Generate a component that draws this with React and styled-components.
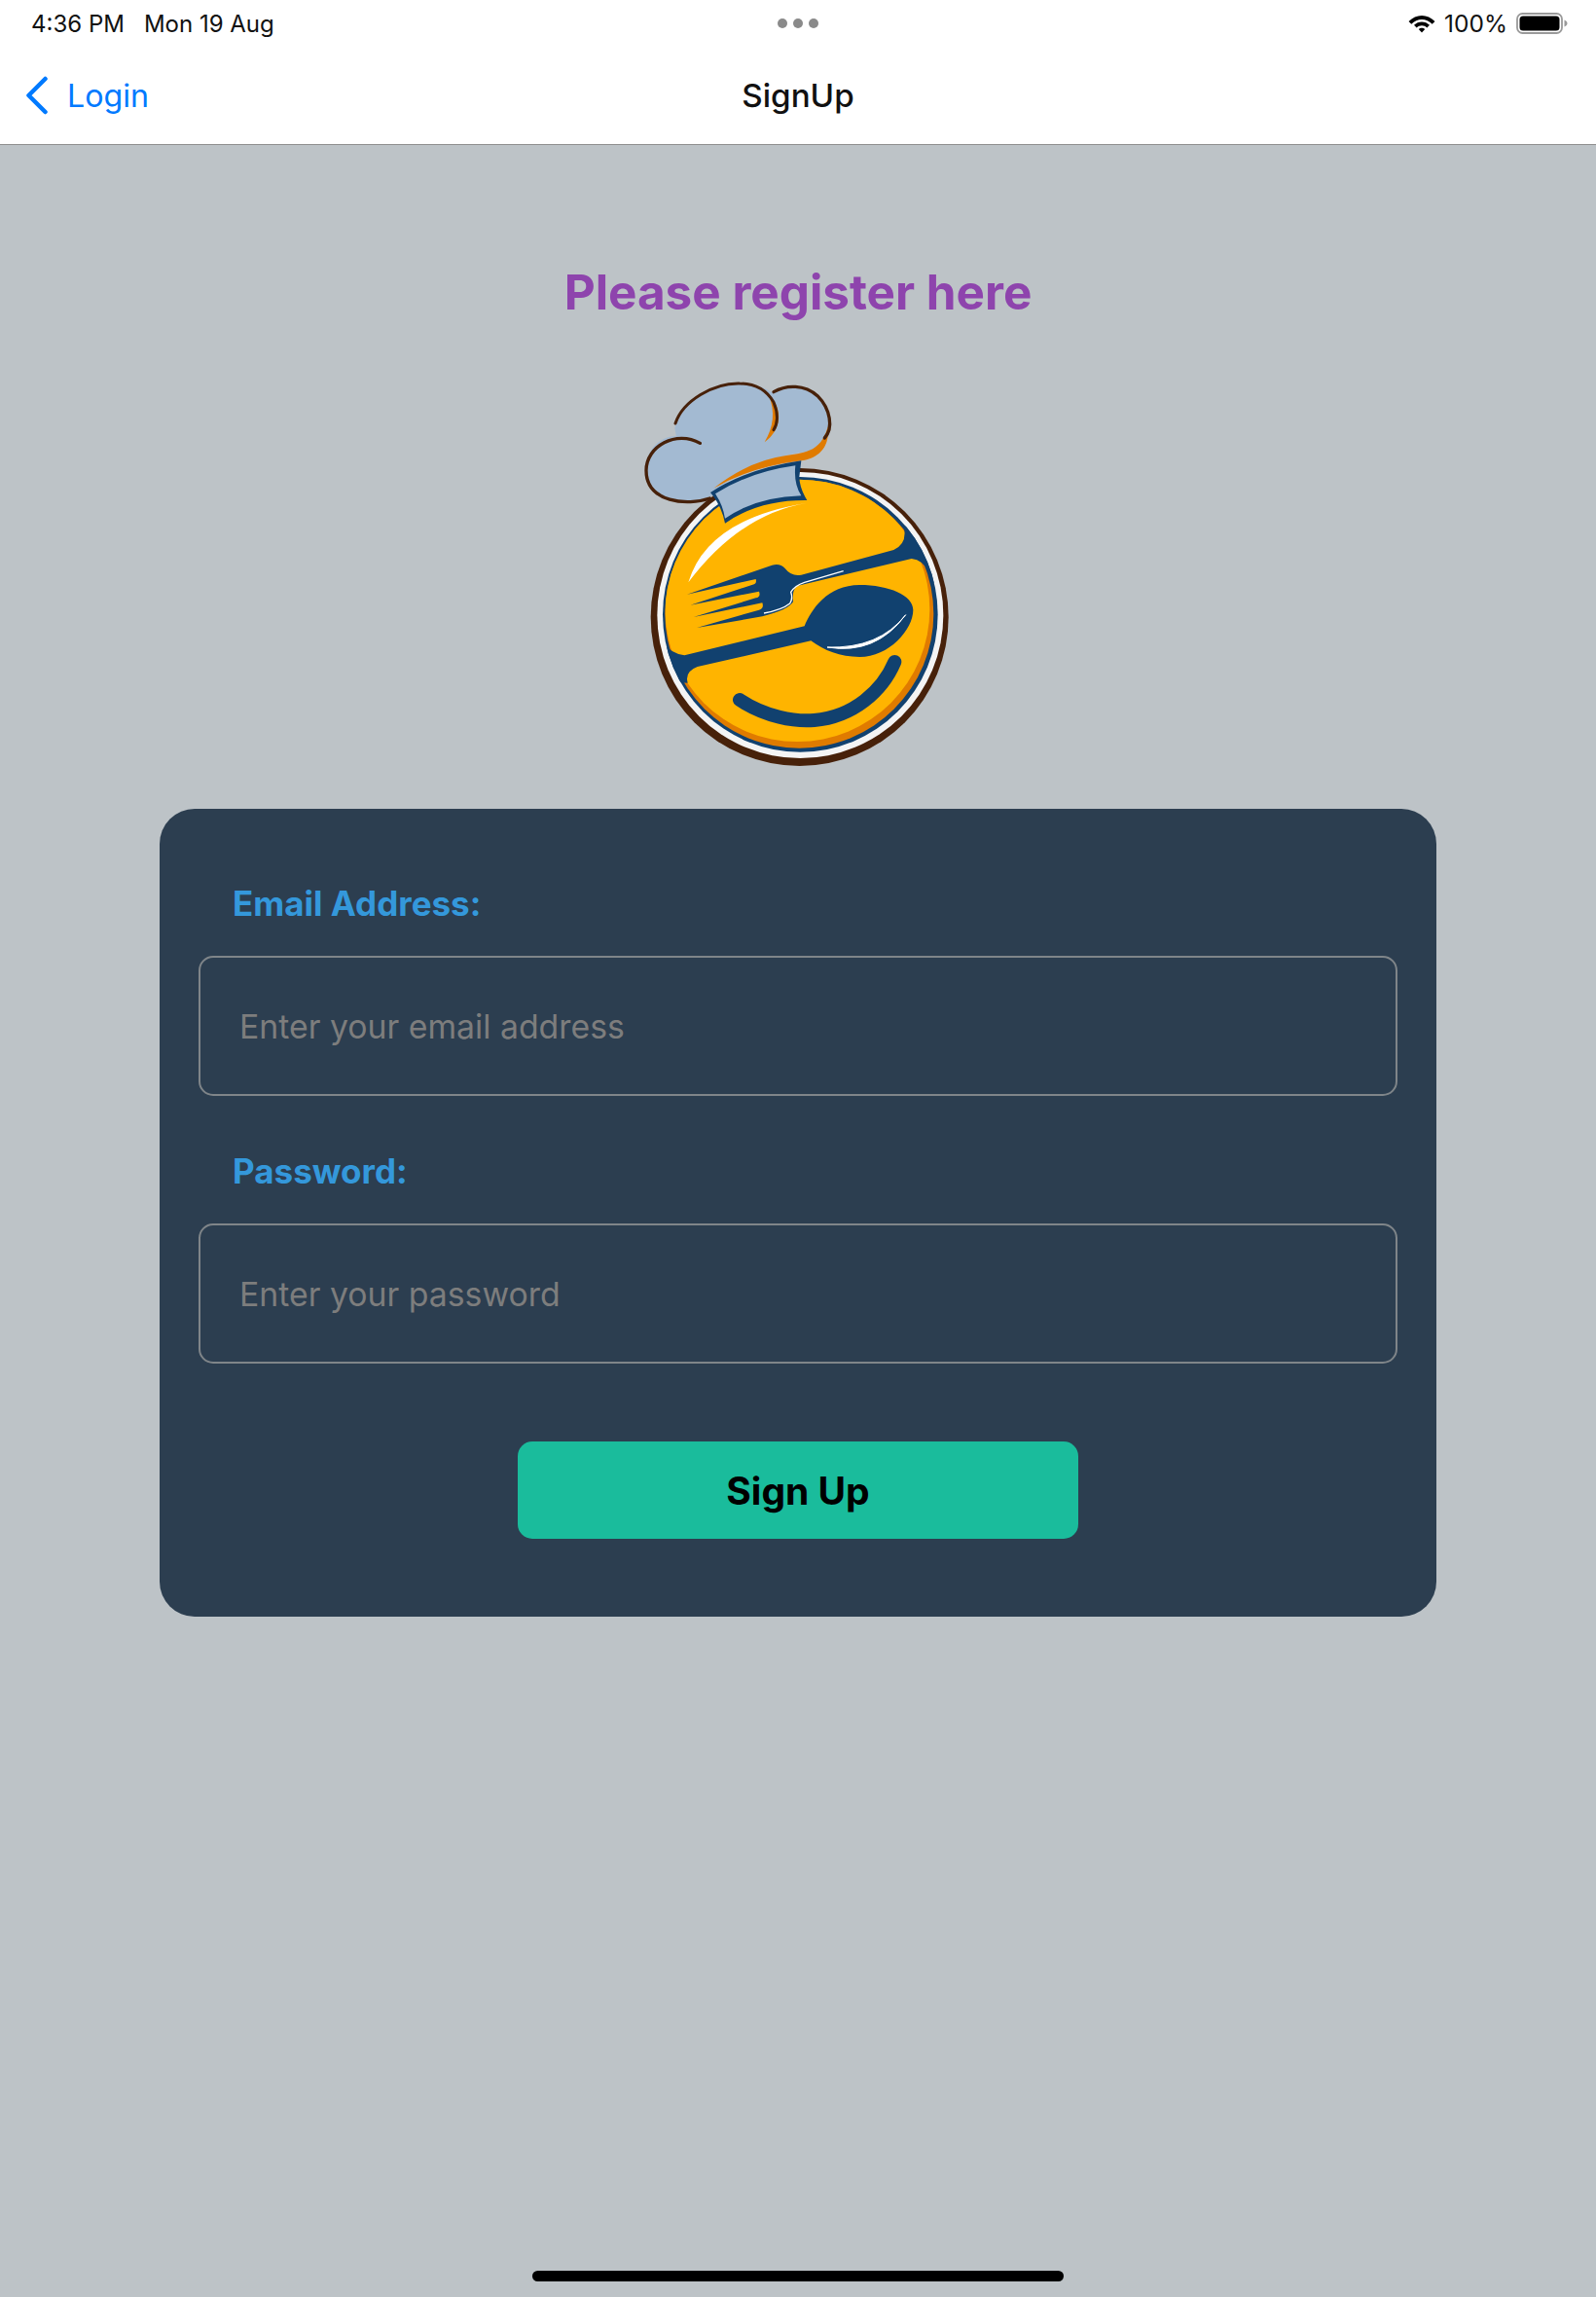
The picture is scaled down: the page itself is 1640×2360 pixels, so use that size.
import React from 'react';
import styled, { createGlobalStyle } from 'styled-components';

const GlobalStyle = createGlobalStyle`
  html, body {
    margin: 0;
    padding: 0;
    background: #bdc3c7;
  }
  body {
    font-family: Inter, "Noto Sans", sans-serif;
  }
  * {
    box-sizing: border-box;
  }
`;

const Page = styled.div`
  width: 1640px;
  height: 2360px;
  display: flex;
  flex-direction: column;
  background: #bdc3c7;
  overflow: hidden;
`;

const Header = styled.header`
  height: 149px;
  flex: none;
  background: #fff;
  border-bottom: 1px solid #8e8e8e;
  display: flex;
  flex-direction: column;
`;

const StatusBar = styled.div`
  height: 48px;
  padding: 0 28px;
  display: grid;
  grid-template-columns: 1fr auto 1fr;
  align-items: center;
  font-size: 24px;
  color: #111;
`;

const StatusLeft = styled.div`
  display: flex;
  gap: 20px;
  padding-left: 4px;
`;

const Dots = styled.div`
  display: flex;
  gap: 6px;
`;

const Dot = styled.span`
  width: 10px;
  height: 10px;
  border-radius: 50%;
  background: #8a8a8a;
`;

const StatusRight = styled.div`
  display: flex;
  justify-content: flex-end;
  align-items: center;
  gap: 9px;
  font-size: 24.500px;
`;

const NavBar = styled.nav`
  flex: 1;
  padding: 0 26px;
  display: grid;
  grid-template-columns: 1fr auto 1fr;
  align-items: center;
`;

const BackLink = styled.a`
  display: flex;
  align-items: center;
  gap: 19px;
  font-size: 32.200px;
  color: #007aff;
`;

const NavTitle = styled.div`
  font-size: 33.200px;
  font-weight: 500;
  color: #111;
`;

const Main = styled.main`
  flex: 1;
  display: flex;
  flex-direction: column;
  align-items: center;
`;

const Heading = styled.h1`
  margin: 121px 0 0;
  height: 60px;
  line-height: 60px;
  font-size: 49.400px;
  font-weight: 700;
  color: #8e44ad;
`;

const LogoBox = styled.svg`
  display: block;
  width: 380px;
  height: 430px;
  margin-top: 40px;
  flex: none;
`;

const Card = styled.section`
  width: 1312px;
  height: 830px;
  margin-top: 31px;
  padding: 75px 40px 0;
  background: #2c3e50;
  border-radius: 36px;
  display: flex;
  flex-direction: column;
`;

const Label = styled.label`
  display: block;
  height: 44px;
  line-height: 44px;
  padding-left: 35px;
  font-size: 35px;
  font-weight: 650;
  color: #3498db;
`;

const Field = styled.input`
  display: block;
  width: 100%;
  height: 144px;
  margin: 32px 0 55px;
  padding: 0 40px;
  flex: none;
  background: transparent;
  border: 2px solid #7f8589;
  border-radius: 15px;
  font-family: inherit;
  font-size: 33.800px;
  color: #fff;
  outline: none;
  &::placeholder {
    color: #7d7d7d;
    opacity: 1;
  }
`;

const SubmitButton = styled.button`
  display: block;
  width: 576px;
  height: 100px;
  margin: 25px auto 0;
  flex: none;
  border: none;
  border-radius: 15px;
  background: #1abc9c;
  font-family: inherit;
  font-size: 39px;
  font-weight: 650;
  color: #000;
`;

const HomeIndicator = styled.div`
  flex: none;
  width: 546px;
  height: 11px;
  margin: 0 auto 16px;
  border-radius: 6px;
  background: #000;
`;

const Wifi = () => (
  <svg width="28" height="20" viewBox="0 0 28 20">
    <path d="M14 2C9 2 4.500 4 0.500 8L3.300 10.800C6.300 7.800 10 6 14 6S21.700 7.800 24.700 10.800L27.500 8C23.500 4 19 2 14 2Z" fill="#000" />
    <path d="M14 8.500C11 8.500 8.200 9.700 6 11.800L8.700 14.500C10.100 13.100 12 12.300 14 12.300S17.900 13.100 19.300 14.500L22 11.800C19.800 9.700 17 8.500 14 8.500Z" fill="#000" />
    <path d="M14 14.800C12.800 14.800 11.700 15.200 10.800 16.100L14 19.500L17.200 16.100C16.300 15.200 15.200 14.800 14 14.800Z" fill="#000" />
  </svg>
);

const Battery = () => (
  <svg width="54" height="24" viewBox="0 0 54 24">
    <rect x="1" y="2" width="46" height="20" rx="5.500" fill="none" stroke="#9a9a9a" strokeWidth="1.800" />
    <rect x="3.500" y="4.500" width="41" height="15" rx="3.500" fill="#000" />
    <path d="M49.500 8.500C51.500 9.200 52.500 10.500 52.500 12S51.500 14.800 49.500 15.500Z" fill="#9a9a9a" />
  </svg>
);

const BackChevron = () => (
  <svg width="24" height="40" viewBox="0 0 24 40">
    <path d="M20.500 3L3.500 20L20.500 37" fill="none" stroke="#007aff" strokeWidth="4.500" strokeLinecap="round" strokeLinejoin="round" />
  </svg>
);

// coordinates follow a 3x crop of the logo, so the viewBox is 3x its size
const ChefLogo = () => (
  <LogoBox viewBox="30 0 1140 1290">
    <defs>
      <clipPath id="plate">
        <circle cx="604" cy="782" r="414" />
      </clipPath>
      <clipPath id="rim">
        <circle cx="607" cy="784" r="424" />
      </clipPath>
    </defs>
    <circle cx="605" cy="792" r="459" fill="#47210a" />
    <circle cx="607" cy="786" r="441" fill="#f4f4f4" />
    <circle cx="607" cy="784" r="424" fill="#11416f" />
    <circle cx="604" cy="782" r="414" fill="#e07b00" />
    <circle cx="598" cy="768" r="408" fill="#ffb400" clipPath="url(#plate)" />
    <g clipPath="url(#rim)" fill="#11416f">
      <path d="M925 508Q940 565 895 585L610 662Q580 668 560 642Q545 625 520 632L258 722L470 675Q474 690 460 692L268 755L480 713Q486 730 470 733L278 792L490 748Q496 765 480 770L288 825L490 790Q570 770 585 745Q580 705 600 695L950 612Q985 615 1004 655L1015 690L1060 650L990 540Z" />
      <path d="M170 850Q200 905 250 910L620 820C640 770 690 693 790 693C880 693 955 725 955 770C955 830 880 915 790 915C730 915 680 895 640 865L290 945Q250 960 260 995L180 990Z" />
    </g>
    <path d="M420 1047C500 1100 590 1115 650 1110C770 1100 860 1020 898 930" fill="none" stroke="#11416f" strokeWidth="42" strokeLinecap="round" />
    <path d="M262 685Q320 490 628 440Q420 475 262 685Z" fill="#fff" />
    <path d="M690 885Q840 910 932 785Q850 890 690 885Z" fill="#fff" stroke="#fff" strokeWidth="3" />
    <path d="M495 780Q550 770 575 750Q585 735 578 715Q590 695 620 685L740 650" fill="none" stroke="#fff" strokeWidth="4" />

    <path
      d="M330 420C260 450 130 440 130 340C130 265 190 230 225 235L220 210C240 130 340 70 420 72C470 72 505 90 520 100C560 75 620 75 660 110C700 150 710 210 680 250C650 290 610 280 560 295C480 310 400 350 330 420Z"
      fill="#a3bad2"
    />
    <path d="M340 395Q450 310 560 295C610 285 670 290 692 205C700 280 650 305 610 310Q450 330 340 395Z" fill="#e07b00" />
    <path d="M510 108C555 150 550 215 497 253C525 205 530 160 510 108Z" fill="#e07b00" />
    <path d="M330 408Q440 335 610 310L604 360Q605 395 628 432Q480 430 375 503Q365 450 330 408Z" fill="#11416f" />
    <path d="M345 412Q450 345 592 325Q586 380 610 418Q470 422 375 488Q368 445 345 412Z" fill="#a3bad2" />
    <g fill="none" stroke="#47210a" strokeLinecap="round">
      <path d="M328 426C260 450 132 440 132 340C132 265 225 215 298 256" strokeWidth="10" />
      <path d="M222 195C245 125 340 70 420 72C470 72 505 95 525 130C542 170 535 200 525 215" strokeWidth="9" />
      <path d="M525 98C565 75 620 75 660 110C700 150 710 210 682 240" strokeWidth="10" />
    </g>
  </LogoBox>
);

const App = () => (
  <Page>
    <GlobalStyle />
    <Header>
      <StatusBar>
        <StatusLeft>
          <span>4:36 PM</span>
          <span>Mon 19 Aug</span>
        </StatusLeft>
        <Dots>
          <Dot />
          <Dot />
          <Dot />
        </Dots>
        <StatusRight>
          <Wifi />
          <span>100%</span>
          <Battery />
        </StatusRight>
      </StatusBar>
      <NavBar>
        <BackLink>
          <BackChevron />
          Login
        </BackLink>
        <NavTitle>SignUp</NavTitle>
      </NavBar>
    </Header>
    <Main>
      <Heading>Please register here</Heading>
      <ChefLogo />
      <Card>
        <Label>Email Address:</Label>
        <Field placeholder="Enter your email address" />
        <Label>Password:</Label>
        <Field placeholder="Enter your password" />
        <SubmitButton>Sign Up</SubmitButton>
      </Card>
    </Main>
    <HomeIndicator />
  </Page>
);

export default App;
